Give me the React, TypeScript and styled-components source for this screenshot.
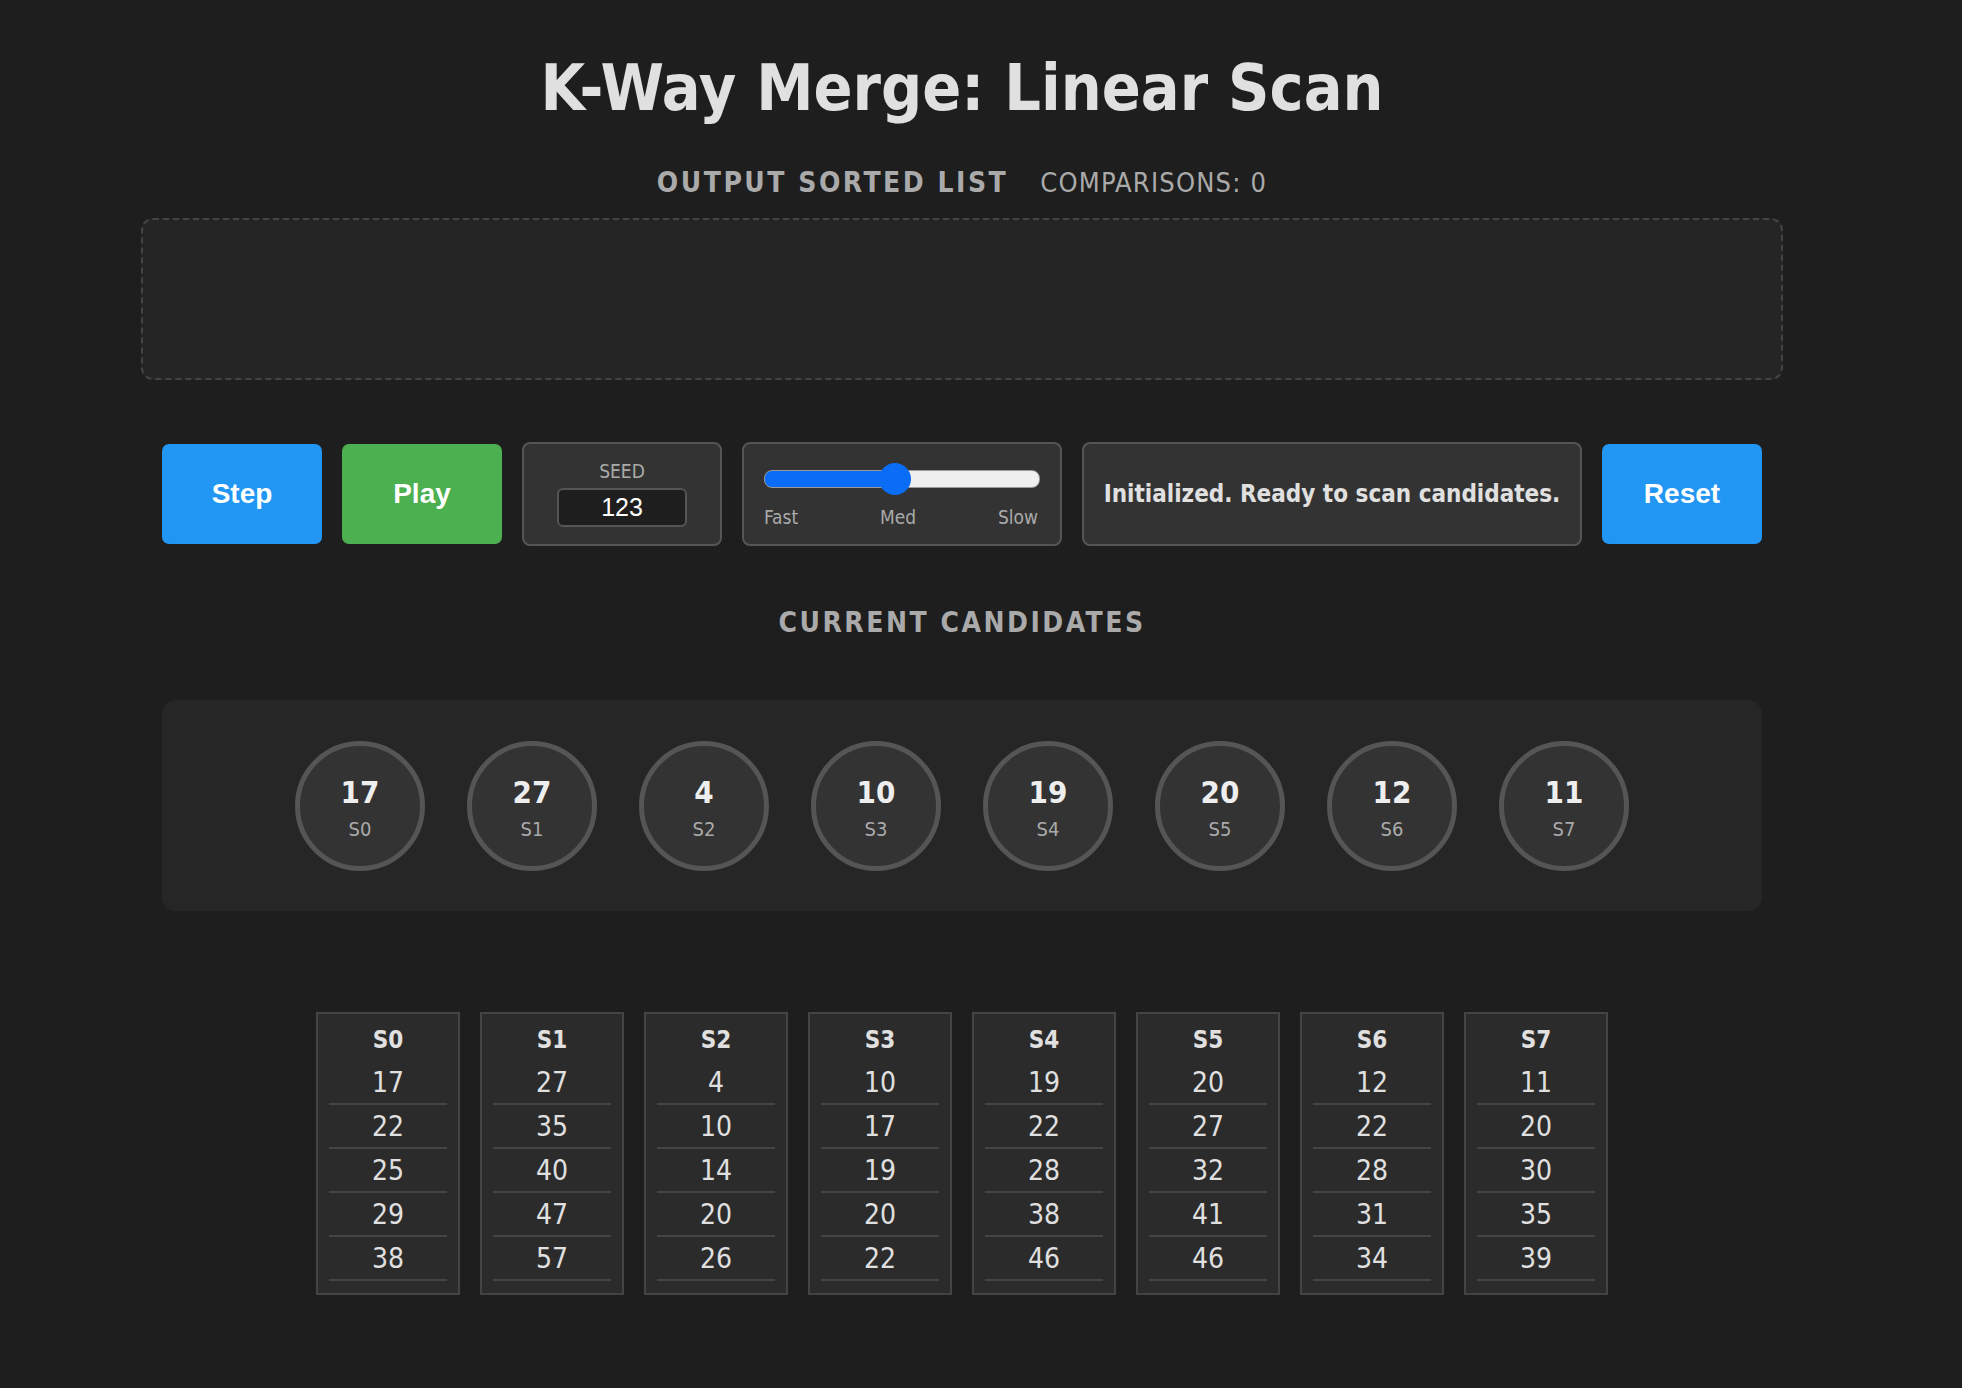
import styled, {createGlobalStyle} from "styled-components";

const GlobalStyle = createGlobalStyle`
  body {
    margin: 0;
    background: #1e1e1e;
    color: #e0e0e0;
    font-family: "DejaVu Sans Condensed", "DejaVu Sans", sans-serif;
    font-stretch: condensed;
  }
`

const Page = styled.div`
  padding-right: 38px;
  padding-bottom: 60px;
`

const Container = styled.main`
  width: 1642px;
  margin: 0 auto;
  display: flex;
  flex-direction: column;
  align-items: center;
`

const Title = styled.h1`
  margin: 50px 0 0;
  font-size: 64px;
  line-height: 77px;
  font-weight: bold;
  color: #e0e0e0;
`

const OutputHead = styled.div`
  margin-top: 40px;
  display: flex;
  align-items: baseline;
  gap: 32px;
  line-height: 32px;
`

const SectionLabel = styled.h2`
  margin: 0;
  font-size: 28px;
  font-weight: bold;
  letter-spacing: 2.5px;
  color: #aaa;
`

const Counter = styled.span`
  font-size: 27px;
  letter-spacing: 1.2px;
  color: #aaa;
`

const OutputBox = styled.div`
  margin-top: 19px;
  width: 100%;
  height: 162px;
  box-sizing: border-box;
  border: 2px dashed #444;
  border-radius: 12px;
  background: #252525;
`

const Controls = styled.div`
  margin-top: 62px;
  display: flex;
  align-items: center;
  gap: 20px;
`

const Button = styled.button<{ $color: string }>`
  width: 160px;
  height: 100px;
  border: none;
  border-radius: 7px;
  background: ${props => props.$color};
  color: #fff;
  font-family: "Liberation Sans", Arial, sans-serif;
  font-size: 28px;
  font-weight: bold;
  cursor: pointer;
`

const Panel = styled.div<{ $width: number }>`
  width: ${props => props.$width}px;
  height: 104px;
  box-sizing: border-box;
  background: #333;
  border: 2px solid #555;
  border-radius: 8px;
  display: flex;
  flex-direction: column;
  align-items: center;
  justify-content: center;
`

const SmallLabel = styled.span`
  margin-top: -2px;
  font-size: 19px;
  color: #aaa;
`

const SeedInput = styled.input`
  margin-top: 6px;
  width: 130px;
  height: 39px;
  box-sizing: border-box;
  background: #1e1e1e;
  border: 2px solid #555;
  border-radius: 6px;
  color: #fff;
  font-family: "Liberation Sans", Arial, sans-serif;
  font-size: 25px;
  text-align: center;
  outline: none;
`

const SliderWrap = styled.div`
  width: 100%;
  box-sizing: border-box;
  padding: 10px 22px 0 20px;
  display: flex;
  flex-direction: column;
`

const Range = styled.input`
  appearance: none;
  -webkit-appearance: none;
  margin: 0;
  width: 100%;
  height: 16px;
  border-radius: 8px;
  border: 1px solid #9a9a9a;
  background: linear-gradient(to right, #0b6cf5 0%, #0b6cf5 50%, #efefef 50%, #efefef 100%);
  outline: none;

  &::-webkit-slider-thumb {
    -webkit-appearance: none;
    width: 32px;
    height: 32px;
    border-radius: 50%;
    background: #0b6cf5;
    border: none;
  }
`

const SpeedLabels = styled.div`
  margin-top: 18px;
  display: flex;
  justify-content: space-between;
  font-size: 19px;
  color: #aaa;
`

const Status = styled.span`
  font-size: 24px;
  font-weight: bold;
  color: #e0e0e0;
`

const CandidatesLabel = styled(SectionLabel)`
  margin-top: 61px;
  line-height: 32px;
`

const CandidatePanel = styled.div`
  margin-top: 61px;
  width: 1600px;
  height: 211px;
  box-sizing: border-box;
  background: #262626;
  border-radius: 14px;
  display: flex;
  align-items: center;
  justify-content: center;
  gap: 42px;
`

const Circle = styled.div`
  width: 130px;
  height: 130px;
  box-sizing: border-box;
  border-radius: 50%;
  border: 5px solid #555;
  background: #333;
  display: flex;
  flex-direction: column;
  align-items: center;
  justify-content: center;
  gap: 9px;
  padding-top: 4px;
`

const CircleValue = styled.span`
  font-size: 31px;
  font-weight: bold;
  line-height: 33px;
  color: #eee;
`

const CircleSource = styled.span`
  font-size: 20px;
  line-height: 22px;
  color: #aaa;
`

const Lists = styled.div`
  margin-top: 101px;
  display: flex;
  gap: 20px;
`

const Column = styled.div`
  width: 144px;
  box-sizing: border-box;
  padding: 5px 11px 12px;
  background: #2b2b2b;
  border: 2px solid #444;
  display: flex;
  flex-direction: column;
`

const ColumnHead = styled.div`
  text-align: center;
  font-size: 24px;
  font-weight: bold;
  line-height: 42px;
  color: #e0e0e0;
`

const Cell = styled.div`
  height: 44px;
  box-sizing: border-box;
  border-bottom: 2px solid #444;
  display: flex;
  align-items: center;
  justify-content: center;
  font-size: 28px;
  color: #e0e0e0;
`

const streams = [
    [17, 22, 25, 29, 38],
    [27, 35, 40, 47, 57],
    [4, 10, 14, 20, 26],
    [10, 17, 19, 20, 22],
    [19, 22, 28, 38, 46],
    [20, 27, 32, 41, 46],
    [12, 22, 28, 31, 34],
    [11, 20, 30, 35, 39],
]

export default function App() {
    return <Page>
        <GlobalStyle/>
        <Container>
            <Title>K-Way Merge: Linear Scan</Title>
            <OutputHead>
                <SectionLabel>OUTPUT SORTED LIST</SectionLabel>
                <Counter>COMPARISONS: 0</Counter>
            </OutputHead>
            <OutputBox/>
            <Controls>
                <Button $color="#2196f3">Step</Button>
                <Button $color="#4caf50">Play</Button>
                <Panel $width={200}>
                    <SmallLabel>SEED</SmallLabel>
                    <SeedInput defaultValue="123"/>
                </Panel>
                <Panel $width={320}>
                    <SliderWrap>
                        <Range type="range" min={0} max={100} defaultValue={47}/>
                        <SpeedLabels>
                            <span>Fast</span>
                            <span>Med</span>
                            <span>Slow</span>
                        </SpeedLabels>
                    </SliderWrap>
                </Panel>
                <Panel $width={500}>
                    <Status>Initialized. Ready to scan candidates.</Status>
                </Panel>
                <Button $color="#2196f3">Reset</Button>
            </Controls>
            <CandidatesLabel>CURRENT CANDIDATES</CandidatesLabel>
            <CandidatePanel>
                {streams.map((s, i) => <Circle key={i}>
                    <CircleValue>{s[0]}</CircleValue>
                    <CircleSource>S{i}</CircleSource>
                </Circle>)}
            </CandidatePanel>
            <Lists>
                {streams.map((s, i) => <Column key={i}>
                    <ColumnHead>S{i}</ColumnHead>
                    {s.map((v, j) => <Cell key={j}>{v}</Cell>)}
                </Column>)}
            </Lists>
        </Container>
    </Page>
}
